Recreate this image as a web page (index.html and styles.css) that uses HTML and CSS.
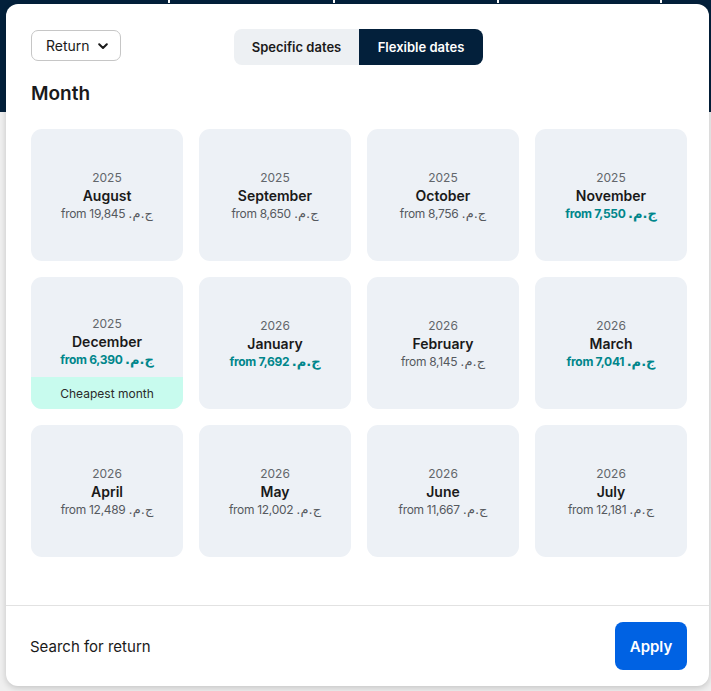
FILE: index.html
```html
<!DOCTYPE html>
<html lang="en">
<head>
<meta charset="utf-8">
<title>Flexible dates</title>
<link rel="stylesheet" href="styles.css">
</head>
<body>
<div class="page-bg">
  <div class="bg-header">
    <span class="seg s1"></span><span class="seg s2"></span><span class="seg s3"></span><span class="seg s4"></span><span class="seg s5"></span>
  </div>
</div>
<div class="panel">
  <div class="main">
    <div class="top-row">
      <button class="dropdown">Return
        <svg class="chev" width="10" height="7" viewBox="0 0 10 7"><path d="M1.2 1.2 L5 5 L8.8 1.2" fill="none" stroke="#1a1a1a" stroke-width="2" stroke-linecap="round" stroke-linejoin="round"/></svg>
      </button>
      <div class="toggle">
        <span class="tab">Specific dates</span>
        <span class="tab active">Flexible dates</span>
      </div>
      <div></div>
    </div>
    <h2 class="heading">Month</h2>
    <div class="grid">
      <div class="card"><div class="info"><div class="year">2025</div><div class="month">August</div><div class="price">from 19,845 <span class="cur" dir="rtl">ج.م.</span></div></div></div>
      <div class="card"><div class="info"><div class="year">2025</div><div class="month">September</div><div class="price">from 8,650 <span class="cur" dir="rtl">ج.م.</span></div></div></div>
      <div class="card"><div class="info"><div class="year">2025</div><div class="month">October</div><div class="price">from 8,756 <span class="cur" dir="rtl">ج.م.</span></div></div></div>
      <div class="card"><div class="info"><div class="year">2025</div><div class="month">November</div><div class="price cheap">from 7,550 <span class="cur" dir="rtl">ج.م.</span></div></div></div>
      <div class="card cheapest"><div class="info"><div class="year">2025</div><div class="month">December</div><div class="price cheap">from 6,390 <span class="cur" dir="rtl">ج.م.</span></div></div><div class="badge">Cheapest month</div></div>
      <div class="card"><div class="info"><div class="year">2026</div><div class="month">January</div><div class="price cheap">from 7,692 <span class="cur" dir="rtl">ج.م.</span></div></div></div>
      <div class="card"><div class="info"><div class="year">2026</div><div class="month">February</div><div class="price">from 8,145 <span class="cur" dir="rtl">ج.م.</span></div></div></div>
      <div class="card"><div class="info"><div class="year">2026</div><div class="month">March</div><div class="price cheap">from 7,041 <span class="cur" dir="rtl">ج.م.</span></div></div></div>
      <div class="card"><div class="info"><div class="year">2026</div><div class="month">April</div><div class="price">from 12,489 <span class="cur" dir="rtl">ج.م.</span></div></div></div>
      <div class="card"><div class="info"><div class="year">2026</div><div class="month">May</div><div class="price">from 12,002 <span class="cur" dir="rtl">ج.م.</span></div></div></div>
      <div class="card"><div class="info"><div class="year">2026</div><div class="month">June</div><div class="price">from 11,667 <span class="cur" dir="rtl">ج.م.</span></div></div></div>
      <div class="card"><div class="info"><div class="year">2026</div><div class="month">July</div><div class="price">from 12,181 <span class="cur" dir="rtl">ج.م.</span></div></div></div>
    </div>
  </div>
  <div class="footer">
    <span class="footer-text">Search for return</span>
    <button class="apply">Apply</button>
  </div>
</div>
</body>
</html>
```

FILE: styles.css
```css
* { box-sizing: border-box; }
html, body {
  margin: 0;
  padding: 0;
  width: 711px;
  height: 691px;
  overflow: hidden;
}
body {
  background: #efefef;
  font-family: Inter, Roboto, "DejaVu Sans", sans-serif;
  color: #1a1a1a;
  position: relative;
}
.page-bg {
  position: absolute;
  inset: 0;
}
.bg-header {
  height: 112px;
  background: #03203b;
  display: flex;
  align-items: flex-start;
}
.seg {
  height: 3px;
  background: #03203b;
}
.s1 { width: 168px; }
.s2 { width: 165px; }
.s3 { width: 164px; }
.s4 { width: 163px; }
.s5 { flex: 1; }
.seg + .seg { border-left: 2px solid #ffffff; }

.panel {
  position: absolute;
  left: 6px;
  top: 4px;
  width: 703px;
  height: 682px;
  background: #fff;
  border-radius: 12px;
  box-shadow: 0 2px 6px rgba(0,0,0,0.18);
  display: flex;
  flex-direction: column;
}
.main {
  flex: 1;
  padding: 25px 22px 0 25px;
}
.top-row {
  display: grid;
  grid-template-columns: 1fr auto 1fr;
  align-items: start;
}
.dropdown {
  justify-self: start;
  margin-top: 1px;
  height: 31px;
  width: 90px;
  border: 1px solid #c6c6c6;
  border-radius: 7px;
  background: #fff;
  font-family: inherit;
  font-size: 14px;
  color: #1a1a1a;
  display: flex;
  align-items: center;
  gap: 8px;
  padding: 0 0 0 14px;
}
.chev { margin-top: 1px; }
.toggle {
  display: flex;
  height: 36px;
  border-radius: 8px;
  overflow: hidden;
  background: #edf0f3;
  margin-left: -1px;
}
.tab {
  display: flex;
  align-items: center;
  justify-content: center;
  font-size: 13px;
  font-weight: 600;
  color: #1a1a1a;
  width: 125px;
}
.tab.active {
  background: #03203b;
  color: #fff;
  width: 124px;
}
.heading {
  margin: 17px 0 0 0;
  font-size: 19px;
  line-height: 24px;
  font-weight: 600;
  color: #1a1a1a;
}
.grid {
  margin-top: 23px;
  display: grid;
  grid-template-columns: repeat(4, 152px);
  grid-auto-rows: 132px;
  column-gap: 16px;
  row-gap: 16px;
}
.card {
  background: #edf1f6;
  border-radius: 11px;
  display: flex;
  flex-direction: column;
  overflow: hidden;
  position: relative;
}
.info {
  flex: 1;
  display: flex;
  flex-direction: column;
  align-items: center;
  justify-content: center;
  text-align: center;
  padding-top: 2px;
}
.cheapest .info { padding-top: 0; padding-bottom: 2px; }
.year {
  font-size: 12px;
  line-height: 18px;
  color: #62666b;
}
.month {
  font-size: 14px;
  line-height: 18px;
  font-weight: 600;
  color: #1a1a1a;
}
.price {
  font-size: 12px;
  line-height: 18px;
  height: 18px;
  color: #55595e;
  white-space: nowrap;
  letter-spacing: -0.3px;
}
.cur {
  font-family: "DejaVu Sans", sans-serif;
  font-size: 13px;
  line-height: 12px;
  letter-spacing: 0;
}
.price.cheap {
  color: #00868b;
  font-weight: 700;
}
.badge {
  position: absolute;
  left: 0;
  right: 0;
  bottom: 0;
  height: 32px;
  background: #c8fbee;
  display: flex;
  align-items: center;
  justify-content: center;
  font-size: 12px;
  color: #2a2a2a;
}
.footer {
  border-top: 1px solid #e2e2e2;
  padding: 16px 22px 16px 24px;
  display: flex;
  align-items: center;
  justify-content: space-between;
}
.footer-text {
  font-size: 15px;
  color: #1a1a1a;
}
.apply {
  width: 72px;
  height: 48px;
  border: none;
  border-radius: 8px;
  background: #0062e3;
  color: #fff;
  font-family: inherit;
  font-size: 15px;
  font-weight: 600;
}
```
